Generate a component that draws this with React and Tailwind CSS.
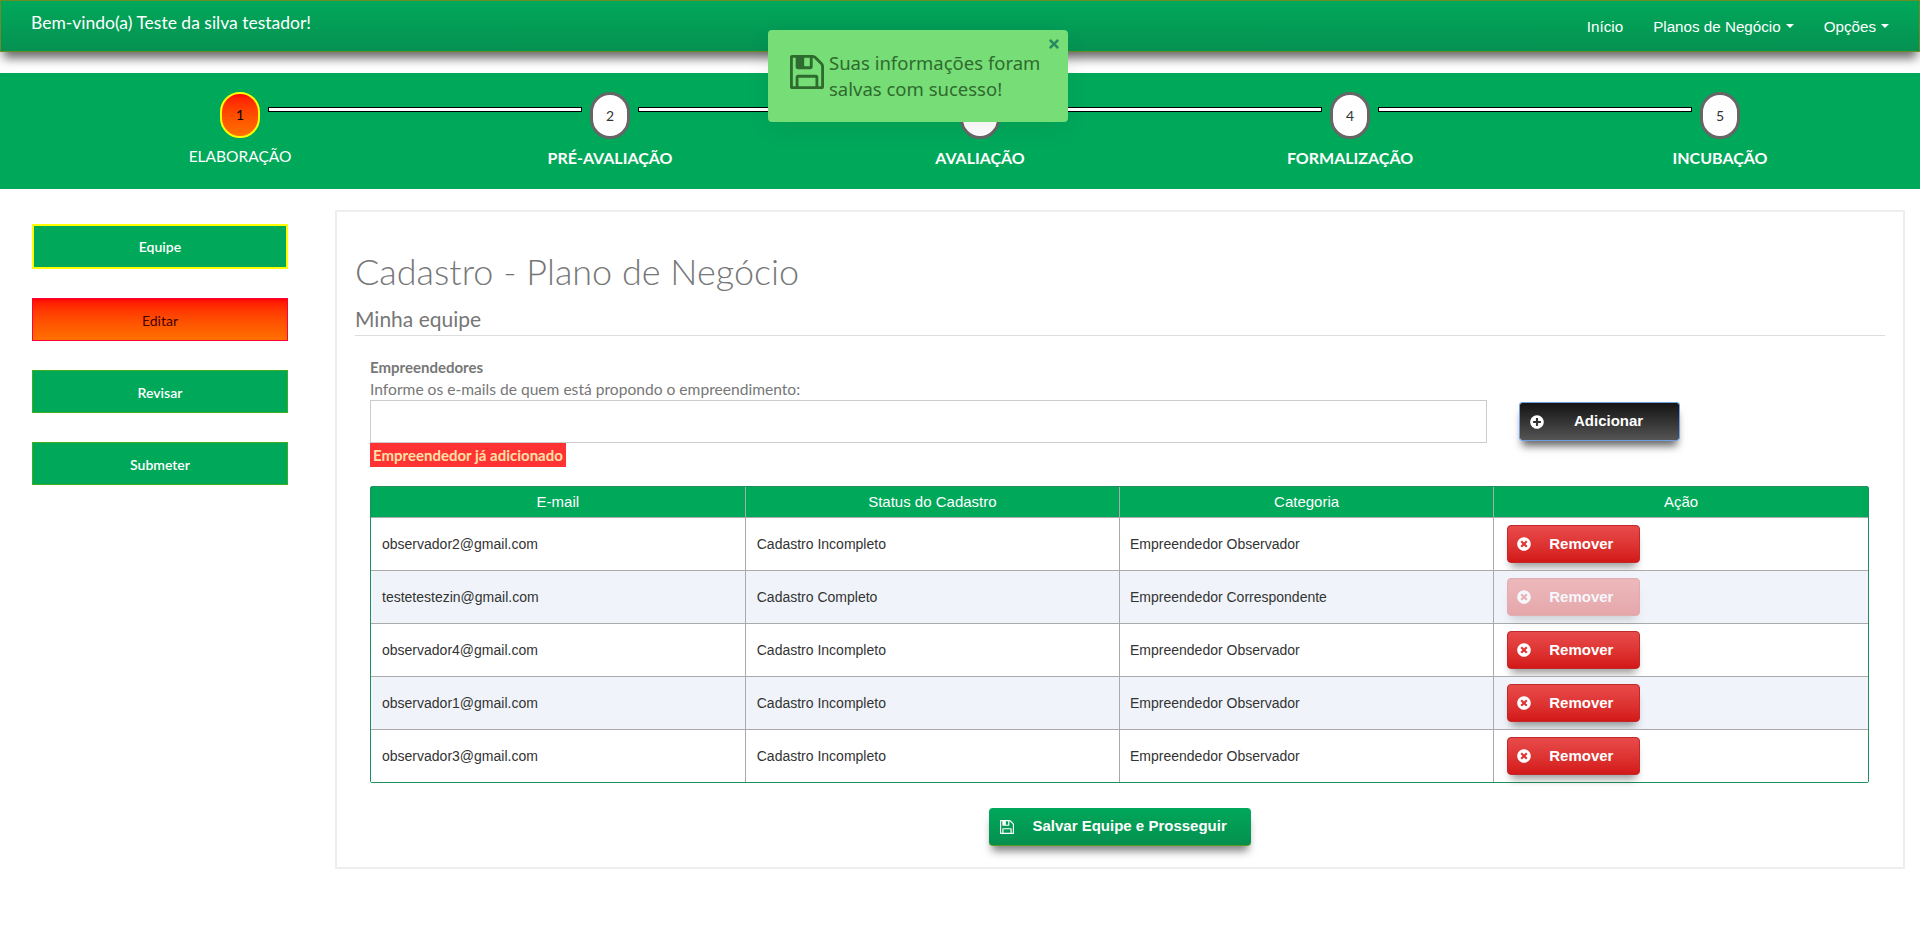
import { FaPlusCircle, FaTimesCircle, FaTimes } from "react-icons/fa"

const steps = ["ELABORAÇÃO", "PRÉ-AVALIAÇÃO", "AVALIAÇÃO", "FORMALIZAÇÃO", "INCUBAÇÃO"]

const rows = [
  { email: "observador2@gmail.com", status: "Cadastro Incompleto", cat: "Empreendedor Observador" },
  { email: "testetestezin@gmail.com", status: "Cadastro Completo", cat: "Empreendedor Correspondente", disabled: true },
  { email: "observador4@gmail.com", status: "Cadastro Incompleto", cat: "Empreendedor Observador" },
  { email: "observador1@gmail.com", status: "Cadastro Incompleto", cat: "Empreendedor Observador" },
  { email: "observador3@gmail.com", status: "Cadastro Incompleto", cat: "Empreendedor Observador" },
]

// old style floppy icon, the one in the toast and the save button
const FloppyIcon = ({ className }) => (
  <svg viewBox="128 128 1536 1536" fill="currentColor" className={className}>
    <path d="M512 1536h768v-384h-768v384zm896 0h128v-896q0-14-10-38.500t-20-34.500l-281-281q-10-10-34-20t-39-10v416q0 40-28 68t-68 28h-576q-40 0-68-28t-28-68v-416h-128v1280h128v-416q0-40 28-68t68-28h832q40 0 68 28t28 68v416zm-384-928v-320q0-13-9.500-22.500t-22.500-9.500h-192q-13 0-22.500 9.500t-9.500 22.500v320q0 13 9.500 22.500t22.500 9.500h192q13 0 22.500-9.500t9.500-22.500zm640 32v928q0 40-28 68t-68 28h-1344q-40 0-68-28t-28-68v-1344q0-40 28-68t68-28h928q40 0 88 20t76 48l280 280q28 28 48 76t20 88z" />
  </svg>
)

const Caret = () => (
  <span className="w-0 h-0 mt-[7px] border-l-[4px] border-r-[4px] border-t-[4px] border-l-transparent border-r-transparent border-t-white"></span>
)

const Line = () => <div className="flex-1 h-[5px] mt-[15px] mx-2 bg-white border border-black"></div>

const Circle = ({ n }) => (
  <div className="w-10 h-[47px] shrink-0 rounded-[20px] border-[3px] border-[#666] bg-white flex items-center justify-center text-sm text-[#333]">
    {n}
  </div>
)

const App = () => {
  return (
    <div className="relative min-h-[935px] bg-white font-['Lato',sans-serif]">
      {/* Navbar */}
      <nav className="h-[52px] flex justify-between bg-gradient-to-b from-[#00a85a] to-[#059152] border border-[#6b8e23] shadow-[0_9px_10px_-3px_rgba(0,0,0,0.6)] text-white">
        <div className="pl-[30px] pt-[10px] text-[17.5px] leading-6">Bem-vindo(a) Teste da silva testador!</div>
        <ul className="flex font-['Liberation_Sans',sans-serif] text-[15.2px] leading-5 pt-[16px] pr-[30px] gap-[30px]">
          <li>Início</li>
          <li className="flex items-start gap-[5px]">
            Planos de Negócio <Caret />
          </li>
          <li className="flex items-start gap-[5px]">
            Opções <Caret />
          </li>
        </ul>
      </nav>

      {/* Stepper */}
      <section className="mt-[21px] h-[116px] bg-[#00a85a] pt-[19px]">
        <div className="flex items-start pl-[220px] pr-[180px]">
          <div className="w-10 h-[46px] shrink-0 rounded-[20px] border-2 border-[#ffff00] bg-gradient-to-b from-[#ff0000] to-[#ff7000] flex items-center justify-center text-sm text-black">
            1
          </div>
          <Line />
          <Circle n="2" />
          <Line />
          <Circle n="3" />
          <Line />
          <Circle n="4" />
          <Line />
          <Circle n="5" />
        </div>
        <div className="grid grid-cols-5 pl-[55px] pr-[15px] mt-[7px] text-white text-center text-[16px] leading-6">
          {steps.map((s, i) => (
            <div key={s} className={i === 0 ? "-mt-[2px] text-[15.5px]" : "font-bold"}>
              {s}
            </div>
          ))}
        </div>
      </section>

      <div className="flex pt-[21px] pr-[15px]">
        {/* Sidebar */}
        <aside className="w-[335px] pl-8 pt-[14px] shrink-0">
          <div className="w-64 flex flex-col text-[14px] font-semibold text-white">
            <button className="h-[45px] bg-[#00a85a] border-2 border-[#ffff00]">Equipe</button>
            <button className="h-[43px] mt-[29px] pt-[2px] bg-gradient-to-b from-[#ff0000] to-[#ff7000] border border-[#ff0040] text-[#400] font-normal">
              Editar
            </button>
            <button className="h-[43px] mt-[29px] pt-[2px] bg-[#00a85a] border border-[#3cb01c]">Revisar</button>
            <button className="h-[43px] mt-[29px] pt-[2px] bg-[#00a85a] border border-[#3cb01c]">Submeter</button>
          </div>
        </aside>

        {/* Main panel */}
        <main className="flex-1 h-[659px] border-2 border-[#eee] px-[18px] pt-[39px]">
          <h1 className="text-[36px] leading-10 font-light text-[#777]">Cadastro - Plano de Negócio</h1>
          <h2 className="mt-[14px] pb-[2px] text-[21px] leading-7 text-[#777] border-b border-[#ddd]">Minha equipe</h2>

          <div className="pl-[15px] pr-[16px]">
            <div className="flex mt-[21px]">
              <div className="w-[1117px] text-[15px] leading-[21px] text-[#777]">
                <div className="font-bold">Empreendedores</div>
                <div className="mt-[1px] text-[15.6px]">Informe os e-mails de quem está propondo o empreendimento:</div>
                <input className="block w-full h-[43px] border border-[#ccc] bg-white" />
                <div className="inline-block h-6 px-[3px] bg-[#ff3333] text-[#ffe0a8] font-bold leading-6 whitespace-nowrap">
                  Empreendedor já adicionado
                </div>
              </div>
              <button className="ml-8 mt-[45px] w-[161px] h-[39px] flex items-center pl-[10px] rounded-[3px] border border-[#6f9fe0] bg-clip-padding bg-gradient-to-b from-[#151515] to-[#555] text-white font-['Liberation_Sans',sans-serif] font-bold text-[15px] shadow-[0_8px_8px_-3px_rgba(0,0,0,0.6)]">
                <FaPlusCircle className="w-[14px] h-[14px]" />
                <span className="ml-[30px]">Adicionar</span>
              </button>
            </div>

            {/* Table */}
            <div className="mt-[19px] border border-[#1f8f5f] rounded-[2px] font-['Liberation_Sans',sans-serif] text-sm">
              <table className="w-full table-fixed border-collapse">
                <thead>
                  <tr className="h-[30px] bg-[#00a85a] text-white text-[15px]">
                    <th className="font-normal border-r border-[#aaa]">E-mail</th>
                    <th className="font-normal border-r border-[#aaa]">Status do Cadastro</th>
                    <th className="font-normal border-r border-[#aaa]">Categoria</th>
                    <th className="font-normal">Ação</th>
                  </tr>
                </thead>
                <tbody>
                  {rows.map((r, i) => (
                    <tr key={r.email} className={`h-[53px] border-t border-[#aaa] text-[#333] ${i % 2 === 1 ? "bg-[#f0f4fa]" : "bg-white"}`}>
                      <td className="pl-[11px] border-r border-[#aaa]">{r.email}</td>
                      <td className="pl-[11px] border-r border-[#aaa]">{r.status}</td>
                      <td className="pl-[10px] border-r border-[#aaa]">{r.cat}</td>
                      <td className="pl-[13px]">
                        <button className={`w-[133px] h-[38px] flex items-center pl-[9px] rounded-[4px] border border-[#c02a2a] bg-gradient-to-b from-[#e84a4a] to-[#d31717] text-white font-bold text-[15px] shadow-[0_8px_8px_-4px_rgba(0,0,0,0.4)] ${r.disabled ? "opacity-35" : ""}`}>
                          <FaTimesCircle className="w-[14px] h-[14px]" />
                          <span className="ml-[18px]">Remover</span>
                        </button>
                      </td>
                    </tr>
                  ))}
                </tbody>
              </table>
            </div>

            <div className="flex justify-center mt-[25px]">
              <button className="w-[262px] h-[38px] flex items-center pl-[9px] rounded-[4px] bg-gradient-to-b from-[#00a85a] to-[#058f4f] border-b border-[#5a9a20] text-white font-['Liberation_Sans',sans-serif] font-bold text-[15px] shadow-[0_8px_8px_-3px_rgba(0,0,0,0.5)]">
                <FloppyIcon className="w-[14px] h-[14px] ml-[2px]" />
                <span className="ml-[19px]">Salvar Equipe e Prosseguir</span>
              </button>
            </div>
          </div>
        </main>
      </div>

      {/* Toast */}
      <div className="absolute left-[768px] top-[30px] w-[300px] h-[92px] rounded-[4px] bg-[#77dd77] shadow-[0_8px_24px_rgba(0,0,0,0.06)] font-['Noto_Sans',sans-serif] text-[#2e6b2e]">
        <FaTimes className="absolute right-[7px] top-[7px] w-[14px] h-[14px] text-[#2a8a5f]" />
        <div className="flex pl-[22px] pt-[25px]">
          <FloppyIcon className="w-[34px] h-[34px] shrink-0" />
          <p className="ml-[5px] -mt-[5px] text-[18.5px] leading-[26px]">
            Suas informações foram
            <br />
            salvas com sucesso!
          </p>
        </div>
      </div>
    </div>
  )
}

export default App
